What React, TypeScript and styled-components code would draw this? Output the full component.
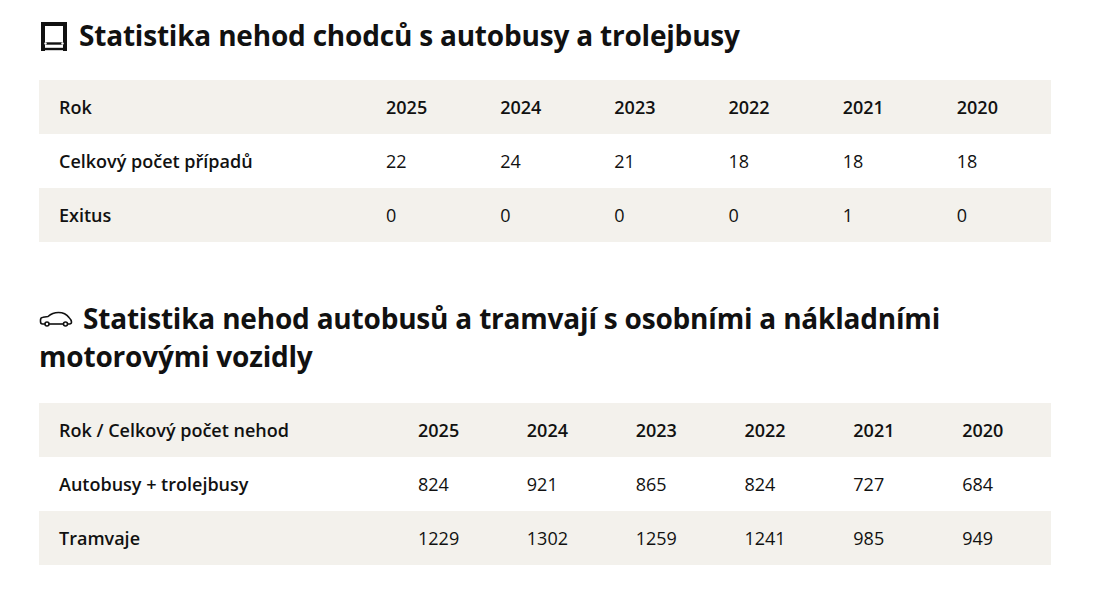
import React from 'react';
import styled, { createGlobalStyle } from 'styled-components';

const GlobalStyle = createGlobalStyle`
  html, body {
    margin: 0;
    padding: 0;
    background: #ffffff;
  }
  body {
    font-family: "Open Sans", "Noto Sans", sans-serif;
    color: #111111;
  }
`;

const Page = styled.div`
  width: 1012px;
  padding: 16px 0 0 39px;
`;

const Section = styled.section<{ gap: number }>`
  margin-bottom: ${p => p.gap}px;
`;

const Heading = styled.h2<{ after: number }>`
  margin: 0 0 ${p => p.after}px;
  font-size: 28px;
  line-height: 38px;
  font-weight: 700;
  letter-spacing: -0.2px;
  color: #111111;
`;

const IconWrap = styled.span<{ drop: number }>`
  display: inline-block;
  vertical-align: ${p => p.drop}px;
  line-height: 0;
  margin-right: 10px;
`;

const Table = styled.table`
  width: 100%;
  border-collapse: collapse;
  table-layout: fixed;
  font-size: 18px;
`;

const Row = styled.tr<{ shaded: boolean }>`
  background: ${p => (p.shaded ? '#f3f1ec' : '#ffffff')};
  & + & td,
  & + & th {
    border-top: 1px solid #e4e1da;
  }
`;

const LabelCell = styled.th<{ w: number }>`
  width: ${p => p.w - 20}px;
  height: 54px;
  padding: 0 0 0 20px;
  text-align: left;
  font-weight: 600;
`;

const ValueCell = styled.td<{ bold: boolean }>`
  height: 54px;
  padding: 0 0 0 20px;
  text-align: left;
  font-weight: ${p => (p.bold ? 600 : 400)};
`;

const BusIcon = () => (
  <svg width="30" height="31" viewBox="0 0 30 31" fill="none">
    <path d="M4 29V2h22v27" stroke="#111" strokeWidth="4" />
    <path d="M4 21.5h22" stroke="#111" strokeWidth="2.4" />
    <circle cx="6.5" cy="21.5" r="1.2" fill="#fff" />
    <circle cx="23.5" cy="21.5" r="1.2" fill="#fff" />
    <path d="M6 27h18" stroke="#111" strokeWidth="2.4" />
  </svg>
);

const CarIcon = () => (
  <svg width="34" height="16" viewBox="0 1 34 16" fill="none" stroke="#111" strokeWidth="1.6">
    <path d="M6 14H3.5C2 14 1.5 13 1.5 11.5V10C1.5 8.5 2.5 7.5 4 7.3L9 6.5C12 3.8 15.5 2.5 19.5 2.5C24 2.5 27.5 4 30 7.5C31.5 9 32.5 10.5 32.5 12C32.5 13.3 31.8 14 30.5 14H28.5" strokeLinejoin="round" />
    <path d="M10 14H25" />
    <circle cx="8" cy="14" r="2" />
    <circle cx="26.5" cy="14" r="2" />
  </svg>
);

type TableData = {
  label: string;
  labelWidth: number;
  years: string[];
  rows: { label: string; values: string[] }[];
};

const pedestrians: TableData = {
  label: 'Rok',
  labelWidth: 327,
  years: ['2025', '2024', '2023', '2022', '2021', '2020'],
  rows: [
    { label: 'Celkový počet případů', values: ['22', '24', '21', '18', '18', '18'] },
    { label: 'Exitus', values: ['0', '0', '0', '0', '1', '0'] },
  ],
};

const vehicles: TableData = {
  label: 'Rok / Celkový počet nehod',
  labelWidth: 359,
  years: ['2025', '2024', '2023', '2022', '2021', '2020'],
  rows: [
    { label: 'Autobusy + trolejbusy', values: ['824', '921', '865', '824', '727', '684'] },
    { label: 'Tramvaje', values: ['1229', '1302', '1259', '1241', '985', '949'] },
  ],
};

const StatTable = ({ data }: { data: TableData }) => (
  <Table>
    <tbody>
      <Row shaded>
        <LabelCell w={data.labelWidth}>{data.label}</LabelCell>
        {data.years.map(y => (
          <ValueCell key={y} bold>{y}</ValueCell>
        ))}
      </Row>
      {data.rows.map((r, i) => (
        <Row key={r.label} shaded={i % 2 === 1}>
          <LabelCell w={data.labelWidth}>{r.label}</LabelCell>
          {r.values.map((v, j) => (
            <ValueCell key={j} bold={false}>{v}</ValueCell>
          ))}
        </Row>
      ))}
    </tbody>
  </Table>
);

export default function App() {
  return (
    <>
      <GlobalStyle />
      <Page>
        <Section gap={57}>
          <Heading after={26}>
            <IconWrap drop={-7}><BusIcon /></IconWrap>
            Statistika nehod chodců s autobusy a trolejbusy
          </Heading>
          <StatTable data={pedestrians} />
        </Section>
        <Section gap={0}>
          <Heading after={28}>
            <IconWrap drop={2}><CarIcon /></IconWrap>
            Statistika nehod autobusů a tramvají s osobními a nákladními motorovými vozidly
          </Heading>
          <StatTable data={vehicles} />
        </Section>
      </Page>
    </>
  );
}
